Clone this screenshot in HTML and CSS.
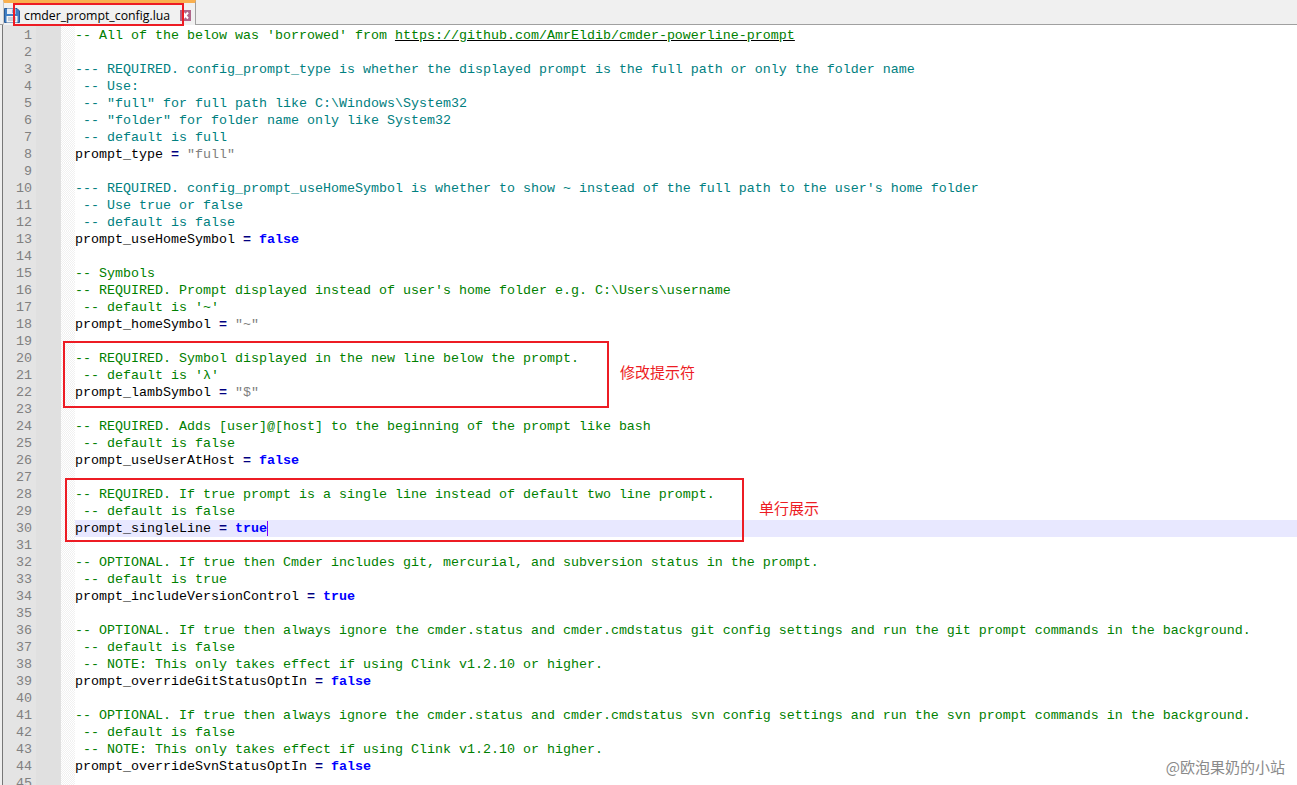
FILE: index.html
```html
<!DOCTYPE html>
<html lang="en">
<head>
<meta charset="utf-8">
<title>cmder_prompt_config.lua</title>
<link rel="stylesheet" href="styles.css">
</head>
<body>
<div class="app">
<header class="tabbar">
<div class="tab">
<svg class="save" viewBox="0 0 16 16" width="16" height="16"><path d="M.5 1.5h12.5l2.5 2.5v11.5H.5z" fill="#3f7fc4" stroke="#2a5a96"/><rect x="3" y="1.5" width="8.5" height="5.5" fill="#e8eef6"/><rect x="8.5" y="2.5" width="2" height="3.5" fill="#3f7fc4"/><rect x="2.5" y="9" width="11" height="6.5" fill="#f4f4f4"/><rect x="4" y="10.5" width="8" height="1" fill="#9ab"/><rect x="4" y="12.5" width="8" height="1" fill="#9ab"/></svg>
<span class="tabname">cmder_prompt_config.lua</span>
<svg class="close" viewBox="0 0 11 11" width="11" height="11"><rect width="11" height="11" fill="#b0668a"/><path d="M3 2.5l5 6M8 2.5l-5 6" stroke="#fff" stroke-width="2"/></svg>
</div>
</header>
<main class="editor">
<div class="row top"><span class="num"></span><span class="mar"></span><span class="fold"></span><span class="code"></span></div>
<div class="row"><span class="num">1</span><span class="mar"></span><span class="fold"></span><span class="code c">-- All of the below was 'borrowed' from <span class="url">https://github.com/AmrEldib/cmder-powerline-prompt</span></span></div>
<div class="row"><span class="num">2</span><span class="mar"></span><span class="fold"></span><span class="code"></span></div>
<div class="row"><span class="num">3</span><span class="mar"></span><span class="fold"></span><span class="code d">--- REQUIRED. config_prompt_type is whether the displayed prompt is the full path or only the folder name</span></div>
<div class="row"><span class="num">4</span><span class="mar"></span><span class="fold"></span><span class="code d"> -- Use:</span></div>
<div class="row"><span class="num">5</span><span class="mar"></span><span class="fold"></span><span class="code d"> -- "full" for full path like C:\Windows\System32</span></div>
<div class="row"><span class="num">6</span><span class="mar"></span><span class="fold"></span><span class="code d"> -- "folder" for folder name only like System32</span></div>
<div class="row"><span class="num">7</span><span class="mar"></span><span class="fold"></span><span class="code d"> -- default is full</span></div>
<div class="row"><span class="num">8</span><span class="mar"></span><span class="fold"></span><span class="code">prompt_type <b class="op">=</b> <span class="s">"full"</span></span></div>
<div class="row"><span class="num">9</span><span class="mar"></span><span class="fold"></span><span class="code"></span></div>
<div class="row"><span class="num">10</span><span class="mar"></span><span class="fold"></span><span class="code d">--- REQUIRED. config_prompt_useHomeSymbol is whether to show ~ instead of the full path to the user's home folder</span></div>
<div class="row"><span class="num">11</span><span class="mar"></span><span class="fold"></span><span class="code d"> -- Use true or false</span></div>
<div class="row"><span class="num">12</span><span class="mar"></span><span class="fold"></span><span class="code d"> -- default is false</span></div>
<div class="row"><span class="num">13</span><span class="mar"></span><span class="fold"></span><span class="code">prompt_useHomeSymbol <b class="op">=</b> <b class="k">false</b></span></div>
<div class="row"><span class="num">14</span><span class="mar"></span><span class="fold"></span><span class="code"></span></div>
<div class="row"><span class="num">15</span><span class="mar"></span><span class="fold"></span><span class="code c">-- Symbols</span></div>
<div class="row"><span class="num">16</span><span class="mar"></span><span class="fold"></span><span class="code c">-- REQUIRED. Prompt displayed instead of user's home folder e.g. C:\Users\username</span></div>
<div class="row"><span class="num">17</span><span class="mar"></span><span class="fold"></span><span class="code c"> -- default is '~'</span></div>
<div class="row"><span class="num">18</span><span class="mar"></span><span class="fold"></span><span class="code">prompt_homeSymbol <b class="op">=</b> <span class="s">"~"</span></span></div>
<div class="row"><span class="num">19</span><span class="mar"></span><span class="fold"></span><span class="code"></span></div>
<div class="row"><span class="num">20</span><span class="mar"></span><span class="fold"></span><span class="code c">-- REQUIRED. Symbol displayed in the new line below the prompt.</span></div>
<div class="row"><span class="num">21</span><span class="mar"></span><span class="fold"></span><span class="code c"> -- default is 'λ'</span></div>
<div class="row"><span class="num">22</span><span class="mar"></span><span class="fold"></span><span class="code">prompt_lambSymbol <b class="op">=</b> <span class="s">"$"</span></span></div>
<div class="row"><span class="num">23</span><span class="mar"></span><span class="fold"></span><span class="code"></span></div>
<div class="row"><span class="num">24</span><span class="mar"></span><span class="fold"></span><span class="code c">-- REQUIRED. Adds [user]@[host] to the beginning of the prompt like bash</span></div>
<div class="row"><span class="num">25</span><span class="mar"></span><span class="fold"></span><span class="code c"> -- default is false</span></div>
<div class="row"><span class="num">26</span><span class="mar"></span><span class="fold"></span><span class="code">prompt_useUserAtHost <b class="op">=</b> <b class="k">false</b></span></div>
<div class="row"><span class="num">27</span><span class="mar"></span><span class="fold"></span><span class="code"></span></div>
<div class="row"><span class="num">28</span><span class="mar"></span><span class="fold"></span><span class="code c">-- REQUIRED. If true prompt is a single line instead of default two line prompt.</span></div>
<div class="row"><span class="num">29</span><span class="mar"></span><span class="fold"></span><span class="code c"> -- default is false</span></div>
<div class="row"><span class="num">30</span><span class="mar"></span><span class="fold"></span><span class="code current">prompt_singleLine <b class="op">=</b> <b class="k caret">true</b></span></div>
<div class="row"><span class="num">31</span><span class="mar"></span><span class="fold"></span><span class="code"></span></div>
<div class="row"><span class="num">32</span><span class="mar"></span><span class="fold"></span><span class="code c">-- OPTIONAL. If true then Cmder includes git, mercurial, and subversion status in the prompt.</span></div>
<div class="row"><span class="num">33</span><span class="mar"></span><span class="fold"></span><span class="code c"> -- default is true</span></div>
<div class="row"><span class="num">34</span><span class="mar"></span><span class="fold"></span><span class="code">prompt_includeVersionControl <b class="op">=</b> <b class="k">true</b></span></div>
<div class="row"><span class="num">35</span><span class="mar"></span><span class="fold"></span><span class="code"></span></div>
<div class="row"><span class="num">36</span><span class="mar"></span><span class="fold"></span><span class="code c">-- OPTIONAL. If true then always ignore the cmder.status and cmder.cmdstatus git config settings and run the git prompt commands in the background.</span></div>
<div class="row"><span class="num">37</span><span class="mar"></span><span class="fold"></span><span class="code c"> -- default is false</span></div>
<div class="row"><span class="num">38</span><span class="mar"></span><span class="fold"></span><span class="code c"> -- NOTE: This only takes effect if using Clink v1.2.10 or higher.</span></div>
<div class="row"><span class="num">39</span><span class="mar"></span><span class="fold"></span><span class="code">prompt_overrideGitStatusOptIn <b class="op">=</b> <b class="k">false</b></span></div>
<div class="row"><span class="num">40</span><span class="mar"></span><span class="fold"></span><span class="code"></span></div>
<div class="row"><span class="num">41</span><span class="mar"></span><span class="fold"></span><span class="code c">-- OPTIONAL. If true then always ignore the cmder.status and cmder.cmdstatus svn config settings and run the svn prompt commands in the background.</span></div>
<div class="row"><span class="num">42</span><span class="mar"></span><span class="fold"></span><span class="code c"> -- default is false</span></div>
<div class="row"><span class="num">43</span><span class="mar"></span><span class="fold"></span><span class="code c"> -- NOTE: This only takes effect if using Clink v1.2.10 or higher.</span></div>
<div class="row"><span class="num">44</span><span class="mar"></span><span class="fold"></span><span class="code">prompt_overrideSvnStatusOptIn <b class="op">=</b> <b class="k">false</b></span></div>
<div class="row"><span class="num">45</span><span class="mar"></span><span class="fold"></span><span class="code"></span></div>
</main>
</div>
<div class="box box-tab"></div>
<div class="box box-lamb"></div>
<div class="box box-single"></div>
<div class="note note-lamb">修改提示符</div>
<div class="note note-single">单行展示</div>
<div class="mark">@欧泡果奶的小站</div>
</body>
</html>
```
FILE: styles.css
```css
html, body {
  margin: 0;
  height: 100%;
  overflow: hidden;
  background: #fff;
}
.app {
  display: flex;
  flex-direction: column;
  height: 785px;
  overflow: hidden;
}
.tabbar {
  flex: none;
  height: 25px;
  box-sizing: border-box;
  padding-left: 3px;
  background: #f0f0f0;
  border-bottom: 1px solid #a0a0a0;
  display: flex;
}
.tab {
  width: 193px;
  height: 25px;
  box-sizing: border-box;
  display: flex;
  align-items: center;
  padding: 2px 0 0 0;
  background: #f1f1f1;
  border-top: 3px solid #fab04f;
  border-right: 1px solid #a0a0a0;
  border-left: 1px solid #c8c8c8;
}
.save {
  flex: none;
}
.tabname {
  font: 12.3px "Open Sans", "Liberation Sans", sans-serif;
  color: #000;
  margin-left: 4px;
  width: 156px;
  white-space: nowrap;
}
.close {
  flex: none;
}
.editor {
  flex: 1;
  min-height: 0;
  border-left: 1px solid #777;
  margin-left: 2px;
  box-shadow: -2px 0 0 #efefef;
}
.row {
  display: flex;
  height: 17px;
}
.row.top {
  height: 2px;
}
.num {
  flex: none;
  width: 29px;
  padding-right: 4px;
  background: #e4e4e4;
  color: #808080;
  text-align: right;
  font: 13.33px/17px "Liberation Mono", monospace;
}
.mar {
  flex: none;
  width: 25px;
  background: #e0e0e0;
}
.fold {
  flex: none;
  width: 14px;
  background: repeating-conic-gradient(#f1f1f1 0 25%, #fff 0 50%) 0 0 / 2px 2px;
}
.code {
  flex: 1;
  min-width: 0;
  font: 13.33px/17px "Liberation Mono", monospace;
  color: #000;
  white-space: pre;
}
.c {
  color: #008000;
}
.d {
  color: #008080;
}
.url {
  text-decoration: underline;
  text-decoration-color: #000;
}
.s {
  color: #808080;
}
.op {
  color: #000080;
}
.k {
  color: #0000ff;
}
.caret {
  border-right: 1px solid #8000ff;
  margin-right: -1px;
}
.current {
  background: #e8e8ff;
}
.box {
  position: absolute;
  box-sizing: border-box;
  border: 2px solid #ed1c24;
}
.box-tab {
  left: 13px;
  top: 3px;
  width: 171px;
  height: 23px;
}
.box-lamb {
  left: 63px;
  top: 341px;
  width: 546px;
  height: 67px;
}
.box-single {
  left: 65px;
  top: 478px;
  width: 679px;
  height: 64px;
}
.note {
  position: absolute;
  font: 15px/20px "Noto Sans CJK SC", sans-serif;
  color: #ed1c24;
}
.note-lamb {
  left: 620px;
  top: 362px;
}
.note-single {
  left: 759px;
  top: 498px;
}
.mark {
  position: absolute;
  right: 12px;
  top: 757px;
  font: 15px/20px "Noto Sans CJK SC", sans-serif;
  color: #8a8a8a;
}
```
